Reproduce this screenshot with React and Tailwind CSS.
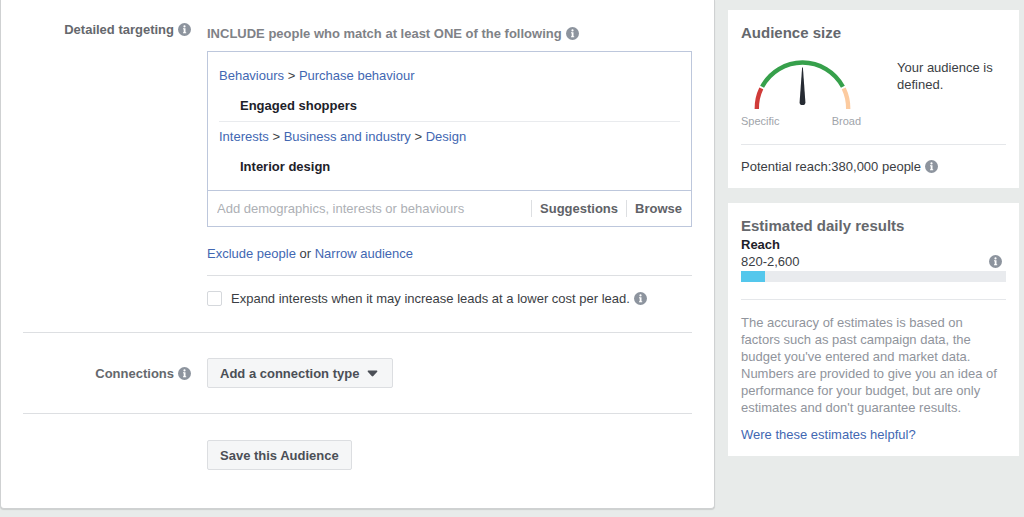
import React from "react";

const InfoIcon = () => (
    <svg className="inline-block shrink-0" width="13" height="13" viewBox="0 0 13 13" aria-hidden="true">
        <circle cx="6.5" cy="6.5" r="6.5" fill="#8d949e" />
        <circle cx="6.5" cy="3.4" r="1.1" fill="#fff" />
        <path d="M5 5.3h2.5v4h.7v1H5v-1h.7v-3H5z" fill="#fff" />
    </svg>
);

const Link = ({ children }) => (
    <a href="#" className="text-[#4267b2] hover:underline">{children}</a>
);

const TargetingGroup = ({ path, name }) => (
    <div>
        <p>
            {path.map((part, index) => (
                <React.Fragment key={part}>
                    {index > 0 && " > "}
                    <Link>{part}</Link>
                </React.Fragment>
            ))}
        </p>
        <p className="mt-[13px] pl-[21px] font-bold text-[#1d2129]">{name}</p>
    </div>
);

const Gauge = () => (
    <div className="w-[120px] shrink-0">
        <svg width="120" height="51" viewBox="0 0 120 51" aria-hidden="true">
            <g fill="none" strokeWidth="4.4">
                <path d="M15.8 50A45.8 45.8 0 0 1 20.3 29.4" stroke="#d03b39" />
                <path d="M21.1 27.8A45.8 45.8 0 0 1 101.9 27.8" stroke="#36a04b" />
                <path d="M102.7 29.4A45.8 45.8 0 0 1 107.2 50" stroke="#fccba0" />
            </g>
            <path d="M61.1 8.5h.8L64.4 43.2a2.9 2.9 0 0 1-5.8 0z" fill="#262b33" />
        </svg>
        <div className="mt-[3px] flex justify-between text-[11px] leading-4 text-[#a0a4aa]">
            <span>Specific</span>
            <span>Broad</span>
        </div>
    </div>
);

const DetailedTargeting = () => (
    <section className="flex gap-4 border-b border-[#dddfe2] pb-[25px]">
        <h2 className="flex w-[168px] shrink-0 items-center justify-end gap-1 self-start pt-[21px] font-bold text-[#65686d]">
            Detailed targeting <InfoIcon />
        </h2>
        <div className="min-w-0 flex-1 pt-[25px]">
            <h3 className="flex items-center gap-1 font-bold text-[#7f8287]">
                INCLUDE people who match at least ONE of the following <InfoIcon />
            </h3>
            <div className="mt-[9px] border border-[#bdc7dc]">
                <div className="px-[11px] py-[15px]">
                    <TargetingGroup path={["Behaviours", "Purchase behaviour"]} name="Engaged shoppers" />
                    <div className="mt-[7px] border-t border-[#e9ebee] pt-[6px]">
                        <TargetingGroup path={["Interests", "Business and industry", "Design"]} name="Interior design" />
                    </div>
                </div>
                <div className="flex h-[36px] items-center border-t border-[#bdc7dc] px-[9px] font-bold text-[#5f6267]">
                    <input
                        type="text"
                        aria-label="Add demographics, interests or behaviours"
                        placeholder="Add demographics, interests or behaviours"
                        className="min-w-0 flex-1 font-normal text-[#1d2129] outline-none placeholder:text-[#adb0b5]"
                    />
                    <button type="button" className="border-l border-[#dddfe2] px-2">Suggestions</button>
                    <button type="button" className="border-l border-[#dddfe2] pl-2">Browse</button>
                </div>
            </div>
            <p className="mt-[18px] border-b border-[#dddfe2] pb-[13px]">
                <Link>Exclude people</Link> or <Link>Narrow audience</Link>
            </p>
            <div className="mt-[14px] flex items-center">
                <input
                    id="expand"
                    type="checkbox"
                    className="h-[15px] w-[15px] shrink-0 appearance-none rounded-[2px] border border-[#d5d8dc] bg-white checked:bg-[#4267b2]"
                />
                <label htmlFor="expand" className="mr-1 ml-[9px]">
                    Expand interests when it may increase leads at a lower cost per lead.
                </label>
                <InfoIcon />
            </div>
        </div>
    </section>
);

const AudienceSize = () => (
    <section className="bg-white px-[13px] py-[13px]">
        <h2 className="text-[15px] leading-5 font-bold text-[#65686d]">Audience size</h2>
        <div className="mt-4 flex gap-9 border-b border-[#e5e7ea] pb-[15px]">
            <Gauge />
            <p>Your audience is defined.</p>
        </div>
        <p className="mt-[13px] flex items-center gap-1">
            Potential reach:380,000 people <InfoIcon />
        </p>
    </section>
);

const DailyResults = () => (
    <section className="bg-white px-[13px] py-[13px]">
        <h2 className="text-[15px] leading-5 font-bold text-[#65686d]">Estimated daily results</h2>
        <h3 className="font-bold text-[#1d2129]">Reach</h3>
        <div className="flex items-center justify-between pr-1">
            <span>820-2,600</span>
            <InfoIcon />
        </div>
        <div className="mt-px h-[11px] bg-[#e9ebee]">
            <div className="h-full w-[9%] bg-[#54c7ec]" />
        </div>
        <p className="mt-[17px] border-t border-[#e5e7ea] pt-[14px] pr-2 text-[#90949c]">
            The accuracy of estimates is based on factors such as past campaign data, the budget you've entered
            and market data. Numbers are provided to give you an idea of performance for your budget, but are
            only estimates and don't guarantee results.
        </p>
        <p className="mt-[10px]">
            <Link>Were these estimates helpful?</Link>
        </p>
    </section>
);

const App = () => {
    const buttonClass = "flex h-[30px] items-center rounded-[2px] border border-[#dcdee1] bg-[#f5f6f7] px-3 font-bold text-[#4b4f56]";

    return (
        <div className="flex min-h-screen items-start gap-[13px] bg-[#e8ebea] pr-[5px] font-['Liberation_Sans',Arial,sans-serif] text-[13px] leading-[17px] text-[#3b3e44]">
            <main className="min-w-0 flex-1 rounded-b-[4px] border-x border-b border-[#cfd1d2] bg-white pr-[22px] pb-[38px] pl-[22px] shadow-[0_1px_1px_rgba(0,0,0,0.12)]">
                <DetailedTargeting />
                <section className="flex items-center gap-4 border-b border-[#dddfe2] py-[25px]">
                    <h2 className="flex w-[168px] shrink-0 items-center justify-end gap-1 font-bold text-[#65686d]">
                        Connections <InfoIcon />
                    </h2>
                    <button type="button" className={buttonClass}>
                        Add a connection type
                        <svg className="mr-[2px] ml-2" width="11" height="7" viewBox="0 0 11 7" aria-hidden="true">
                            <path d="M1.2.5h8.6q1 .3.4 1.2L6.3 6q-.8.8-1.6 0L.8 1.7Q.2.8 1.2.5z" fill="#4b4f56" />
                        </svg>
                    </button>
                </section>
                <div className="pt-[26px] pl-[184px]">
                    <button type="button" className={buttonClass}>Save this Audience</button>
                </div>
            </main>
            <aside className="flex w-[291px] shrink-0 flex-col gap-[15px] pt-[10px]">
                <AudienceSize />
                <DailyResults />
            </aside>
        </div>
    );
};

export default App;
